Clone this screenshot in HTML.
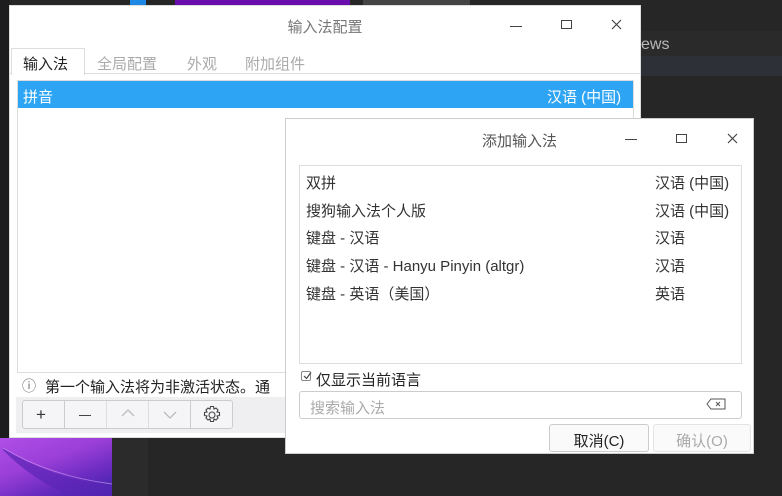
<!DOCTYPE html>
<html><head><meta charset="utf-8"><style>
*{margin:0;padding:0;box-sizing:border-box}
body{width:782px;height:496px;overflow:hidden;background:#262626;position:relative;font-family:"Liberation Sans","Noto Sans CJK SC",sans-serif;font-size:15px;color:#333}
.a{position:absolute}
.t{position:absolute;white-space:nowrap}
</style></head><body>
<div class="a" style="left:0;top:0;width:10px;height:496px;background:#1c1c1f"></div>
<div class="a" style="left:0;top:438px;width:112px;height:58px;background:linear-gradient(160deg,#b04ee8 0%,#9a3fd8 40%,#6a2bc0 70%,#3b23a8 100%)"></div>
<svg class="a" style="left:0;top:438px" width="112" height="58"><path d="M3 10 Q50 40 112 48 L112 58 L70 58 Q30 40 3 12Z" fill="#5a25b5" opacity=".7"/><path d="M3 10 Q50 38 112 46" stroke="#d9a4f4" stroke-width="1" fill="none" opacity=".6"/></svg>
<div class="a" style="left:112px;top:438px;width:36px;height:58px;background:#2b2b2b"></div>
<div class="a" style="left:641px;top:31px;width:141px;height:25px;background:#2a2a2a"></div>
<div class="a" style="left:641px;top:56px;width:141px;height:20px;background:#2d3036"></div>
<div class="t" style="left:641px;top:36px;color:#b8b8b8;font-size:16px">ews</div>
<div class="a" style="left:130px;top:0;width:16px;height:5px;background:#1e88e5"></div>
<div class="a" style="left:175px;top:0;width:175px;height:5px;background:#6a0dad"></div>
<div class="a" style="left:363px;top:0;width:107px;height:5px;background:#444"></div>

<div class="a" style="left:9px;top:5px;width:632px;height:433px;background:#fff;border:1px solid #ddd">
  <div class="t" style="left:0;width:630px;text-align:center;top:10px;color:#777;font-size:15px">输入法配置</div>
  <div class="a" style="left:500px;top:20px;width:12px;height:1px;background:#444"></div>
  <div class="a" style="left:551px;top:14px;width:11px;height:9px;border:1px solid #444"></div>
  <svg class="a" style="left:601px;top:13px" width="11" height="11"><path d="M1 1L10 10M10 1L1 10" stroke="#444" stroke-width="1.2"/></svg>
  <div class="a" style="left:0;top:67px;width:630px;height:1px;background:#ddd"></div>
  <div class="a" style="left:1px;top:42px;width:74px;height:27px;background:#fff;border:1px solid #ddd;border-bottom:none"></div>
  <div class="t" style="left:13px;top:47px;color:#222">输入法</div>
  <div class="t" style="left:87px;top:47px;color:#aaa">全局配置</div>
  <div class="t" style="left:177px;top:47px;color:#aaa">外观</div>
  <div class="t" style="left:235px;top:47px;color:#aaa">附加组件</div>
  <div class="a" style="left:7px;top:74px;width:617px;height:293px;border:1px solid #ddd;background:#fff"></div>
  <div class="a" style="left:8px;top:75px;width:615px;height:27px;background:#2ea5f4"></div>
  <div class="t" style="left:13px;top:80px;color:#fff">拼音</div>
  <div class="t" style="left:537px;top:80px;color:#fff">汉语 (中国)</div>
  <div class="t" style="left:12px;top:370px;color:#666;font-size:14px">ⓘ</div>
  <div class="t" style="left:35px;top:370px;color:#222">第一个输入法将为非激活状态。通</div>
  <div class="a" style="left:6px;top:391px;width:620px;height:36px;background:#efeff2"></div>
  <div class="a" style="left:12px;top:394px;width:211px;height:29px;border:1px solid #ccc;border-radius:3px;background:#f5f5f7"></div>
  <div class="a" style="left:54px;top:395px;width:1px;height:27px;background:#ccc"></div>
  <div class="a" style="left:96px;top:395px;width:1px;height:27px;background:#ddd"></div>
  <div class="a" style="left:138px;top:395px;width:1px;height:27px;background:#ddd"></div>
  <div class="a" style="left:180px;top:395px;width:1px;height:27px;background:#ccc"></div>
  <div class="t" style="left:26px;top:399px;font-size:17px;color:#333">+</div>
  <div class="a" style="left:69px;top:409px;width:12px;height:1px;background:#444"></div>
  <svg class="a" style="left:110px;top:401px" width="16" height="12"><path d="M2 9 L8 3 L14 9" stroke="#bbb" fill="none" stroke-width="1.3"/></svg>
  <svg class="a" style="left:152px;top:403px" width="16" height="12"><path d="M2 3 L8 9 L14 3" stroke="#bbb" fill="none" stroke-width="1.3"/></svg>
  <svg class="a" style="left:192px;top:399px" width="20" height="20" viewBox="0 0 20 20"><path d="M8.5 1.5h3l.5 2.5 2-1 2 2-1 2 2.5.5v3l-2.5.5 1 2-2 2-2-1-.5 2.5h-3l-.5-2.5-2 1-2-2 1-2-2.5-.5v-3l2.5-.5-1-2 2-2 2 1z" fill="none" stroke="#444" stroke-width="1.1"/><circle cx="10" cy="10" r="3" fill="none" stroke="#444" stroke-width="1.1"/></svg>
</div>

<div class="a" style="left:285px;top:118px;width:469px;height:336px;background:#fff;border:1px solid #ccc">
  <div class="t" style="left:0;width:467px;text-align:center;top:11px;color:#555;font-size:15px">添加输入法</div>
  <div class="a" style="left:339px;top:20px;width:12px;height:1px;background:#444"></div>
  <div class="a" style="left:390px;top:15px;width:11px;height:9px;border:1px solid #444"></div>
  <svg class="a" style="left:441px;top:14px" width="11" height="11"><path d="M1 1L10 10M10 1L1 10" stroke="#444" stroke-width="1.2"/></svg>
  <div class="a" style="left:13px;top:46px;width:443px;height:199px;border:1px solid #ddd"></div>
  <div class="t" style="left:20px;top:53px">双拼</div><div class="t" style="left:369px;top:53px">汉语 (中国)</div>
  <div class="t" style="left:20px;top:81px">搜狗输入法个人版</div><div class="t" style="left:369px;top:81px">汉语 (中国)</div>
  <div class="t" style="left:20px;top:108px">键盘 - 汉语</div><div class="t" style="left:369px;top:108px">汉语</div>
  <div class="t" style="left:20px;top:136px">键盘 - 汉语 - Hanyu Pinyin (altgr)</div><div class="t" style="left:369px;top:136px">汉语</div>
  <div class="t" style="left:20px;top:164px">键盘 - 英语（美国）</div><div class="t" style="left:369px;top:164px">英语</div>
  <div class="a" style="left:15px;top:252px;width:10px;height:10px;border:1px solid #888;border-radius:2px"></div>
  <svg class="a" style="left:16px;top:252px" width="10" height="10"><path d="M2 5 L4.5 7.5 L9 1.5" stroke="#444" fill="none" stroke-width="1.2"/></svg>
  <div class="t" style="left:30px;top:250px;color:#222">仅显示当前语言</div>
  <div class="a" style="left:13px;top:272px;width:443px;height:28px;border:1px solid #ccc;border-radius:3px"></div>
  <div class="t" style="left:24px;top:278px;color:#aaa">搜索输入法</div>
  <svg class="a" style="left:420px;top:279px" width="20" height="12"><path d="M5 1 H19 V11 H5 L1 6 Z" fill="none" stroke="#555"/><path d="M10 4 L14 8 M14 4 L10 8" stroke="#555"/></svg>
  <div class="a" style="left:263px;top:305px;width:100px;height:28px;border:1px solid #ccc;border-radius:3px;background:#fafafa"></div>
  <div class="t" style="left:263px;width:100px;text-align:center;top:311px;color:#222">取消(C)</div>
  <div class="a" style="left:367px;top:305px;width:98px;height:28px;border:1px solid #e4e4e4;border-radius:3px;background:#fafafa"></div>
  <div class="t" style="left:367px;width:98px;text-align:center;top:311px;color:#aaa">确认(O)</div>
</div>
</body></html>
